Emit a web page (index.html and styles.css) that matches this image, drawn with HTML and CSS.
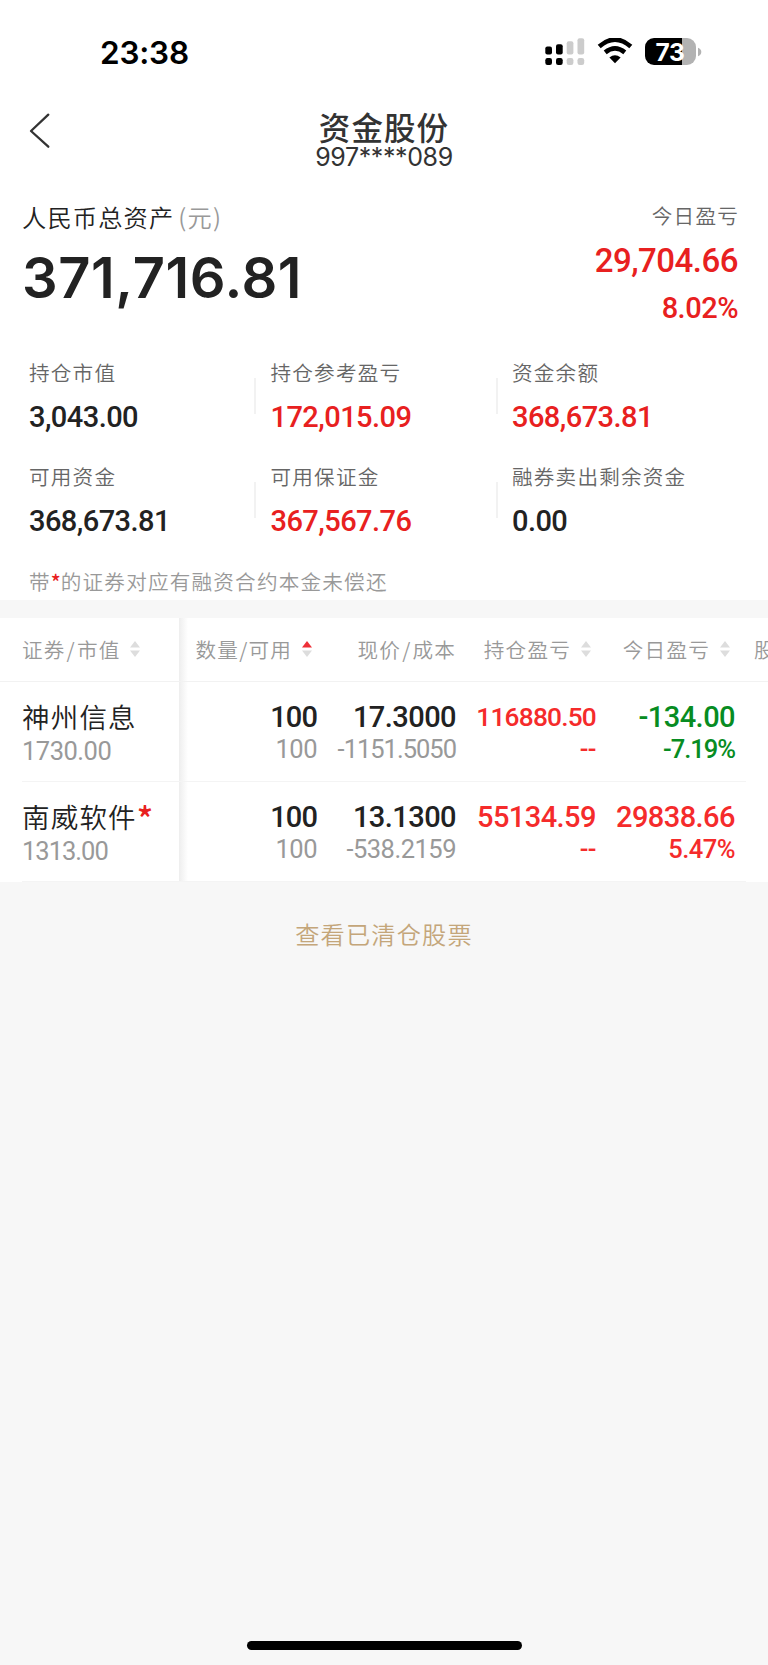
FILE: index.html
```html
<!DOCTYPE html>
<html lang="zh-CN">
<head>
<meta charset="utf-8">
<title>资金股份</title>
<link rel="stylesheet" href="styles.css">
</head>
<body>
<div class="screen">
  <header class="status">
    <span class="clock">23:38</span>
    <svg class="signal" width="40" height="28" viewBox="0 0 40 28">
      <g fill="#000"><rect x="0.3" y="8.5" width="6.7" height="8" rx="2"/><rect x="11" y="6.3" width="6.7" height="10.2" rx="2"/><rect x="0.3" y="20" width="6.7" height="7" rx="2.2"/><rect x="11" y="20" width="6.7" height="7" rx="2.2"/></g>
      <g fill="#ccc"><rect x="21.7" y="3.2" width="6.7" height="13.3" rx="2"/><rect x="32.5" y="0.2" width="6.7" height="16.3" rx="2"/><rect x="21.7" y="20" width="6.7" height="7" rx="2.2"/><rect x="32.5" y="20" width="6.7" height="7" rx="2.2"/></g>
    </svg>
    <svg class="wifi" width="36" height="27" viewBox="0 0 36 27">
      <path d="M2.2 8.4Q18 -5.2 33.8 8.4M8.2 14.4Q18 6.4 27.8 14.4" fill="none" stroke="#000" stroke-width="4.6"/>
      <path d="M12.4 19.6Q18 14.8 23.6 19.6L18 25.2Z"/>
    </svg>
    <div class="battery"><span class="battery-body">73</span><svg width="4" height="10" viewBox="0 0 4 10"><path d="M0 .8Q3.3 2 3.3 5T0 9.2Z" fill="#b2b2b2"/></svg></div>
  </header>

  <nav class="nav">
    <svg class="back" width="22" height="36" viewBox="0 0 22 36"><path d="M19.3 1.7L2 18 19.3 33.7" fill="none" stroke="#333" stroke-width="2.3" stroke-linecap="round" stroke-linejoin="round"/></svg>
    <div class="titles"><h1>资金股份</h1><span class="account">997****089</span></div>
  </nav>

  <section class="summary">
    <div class="total"><div class="total-label">人民币总资产<span class="unit">(元)</span></div><div class="total-value">371,716.81</div></div>
    <div class="today red"><span class="label">今日盈亏</span><span class="today-value">29,704.66</span><span class="today-pct">8.02%</span></div>
  </section>

  <section class="metrics">
    <div class="metric"><span class="label">持仓市值</span><span class="num">3,043.00</span></div>
    <div class="metric"><span class="label">持仓参考盈亏</span><span class="num red">172,015.09</span></div>
    <div class="metric"><span class="label">资金余额</span><span class="num red">368,673.81</span></div>
    <div class="metric"><span class="label">可用资金</span><span class="num">368,673.81</span></div>
    <div class="metric"><span class="label">可用保证金</span><span class="num red">367,567.76</span></div>
    <div class="metric"><span class="label">融券卖出剩余资金</span><span class="num">0.00</span></div>
  </section>
  <p class="note">带<b>*</b>的证券对应有融资合约本金未偿还</p>

  <section class="table">
    <div class="fixed">
      <div class="head">证券<i>/</i>市值<svg class="sort" width="10" height="16" viewBox="0 0 10 16"><path d="M0 6.5L5 0l5 6.5zM0 9.5h10L5 16z"/></svg></div>
      <div class="stock"><span class="name">神州信息</span><span class="sub">1730.00</span></div>
      <div class="stock"><span class="name">南威软件<b>*</b></span><span class="sub narrow">1313.00</span></div>
    </div>
    <div class="scroll">
      <div class="head cells">
        <span class="c1">数量/可用<svg class="sort" width="10" height="16" viewBox="0 0 10 16"><path class="on" d="M0 6.5L5 0l5 6.5z"/><path d="M0 9.5h10L5 16z"/></svg></span>
        <span class="c2">现价<i>/</i>成本</span>
        <span class="c3">持仓盈亏<svg class="sort" width="10" height="16" viewBox="0 0 10 16"><path d="M0 6.5L5 0l5 6.5zM0 9.5h10L5 16z"/></svg></span>
        <span class="c4">今日盈亏<svg class="sort" width="10" height="16" viewBox="0 0 10 16"><path d="M0 6.5L5 0l5 6.5zM0 9.5h10L5 16z"/></svg></span>
        <span class="c5">股份</span>
      </div>
      <div class="row cells">
        <div class="c1"><span class="num">100</span><span class="sub">100</span></div>
        <div class="c2"><span class="num">17.3000</span><span class="sub narrow">-1151.5050</span></div>
        <div class="c3 up"><span class="num small">116880.50</span><span class="sub">--</span></div>
        <div class="c4 down"><span class="num">-134.00</span><span class="sub narrow">-7.19%</span></div>
      </div>
      <div class="row cells">
        <div class="c1"><span class="num">100</span><span class="sub">100</span></div>
        <div class="c2"><span class="num">13.1300</span><span class="sub">-538.2159</span></div>
        <div class="c3 up"><span class="num">55134.59</span><span class="sub">--</span></div>
        <div class="c4 up"><span class="num">29838.66</span><span class="sub">5.47%</span></div>
      </div>
    </div>
  </section>

  <a class="closed">查看已清仓股票</a>
  <div class="home"></div>
</div>
</body>
</html>
```
FILE: styles.css
```css
* { box-sizing: border-box; }
body { margin: 0; background: #f7f7f7; color: #222; font-family: "Noto Sans CJK SC", sans-serif; font-weight: 350; }
.screen { width: 768px; height: 1665px; display: flex; flex-direction: column; overflow: hidden; }
svg { display: block; flex: none; }
i { font-style: normal; margin: 0 1px; }
.status { height: 90px; flex: none; background: #fff; display: flex; align-items: flex-start; padding: 38px 66px 0 100px; font-family: Inter, sans-serif; }
.clock { font-size: 31.5px; font-weight: 600; line-height: 30px; color: #000; letter-spacing: -.2px; }
.signal { margin-left: auto; }
.wifi { margin-left: 12px; }
.battery { display: flex; align-items: center; gap: 2px; margin-left: 12px; }
.battery-body { width: 51px; height: 27px; border-radius: 9px; background: linear-gradient(90deg, #000 37px, #b2b2b2 37px); color: #fff; font-size: 24.5px; font-weight: 700; line-height: 28px; text-align: center; padding-right: 1px; letter-spacing: -.3px; }
.nav { height: 94px; flex: none; background: #fff; position: relative; }
.back { position: absolute; left: 29px; top: 23px; }
.titles { display: flex; flex-direction: column; align-items: center; padding-top: 18px; color: #333; }
h1 { margin: 0; font-size: 31.5px; font-weight: 500; line-height: 37px; letter-spacing: 1.1px; }
.account { font: 400 25px/24px Inter, sans-serif; letter-spacing: -.4px; }
.summary { height: 166px; flex: none; background: #fff; display: flex; justify-content: space-between; padding: 14px 30px 0 22px; }
.total-label { font-size: 24.2px; line-height: 38px; letter-spacing: 1.2px; }
.unit { color: #999; margin-left: 4px; }
.total-value { font: 600 56px/84px Inter, sans-serif; letter-spacing: .6px; }
.today { display: flex; flex-direction: column; align-items: flex-end; font-family: Roboto, sans-serif; font-weight: 500; letter-spacing: -.5px; }
.today .label { line-height: 34px; margin-right: -1px; }
.today-value { font-size: 33px; line-height: 58px; }
.today-pct { font-size: 29px; line-height: 36px; }
.label { font-family: "Noto Sans CJK SC", sans-serif; font-weight: 350; font-size: 20.6px; letter-spacing: 1.2px; color: #666; line-height: 36px; }
.red { color: #e82020; }
.metrics { flex: none; height: 208px; background: #fff; display: grid; grid-template-columns: 241.5px 241.5px 1fr; grid-auto-rows: 103.5px; padding: 0 0 0 29px; }
.metric { display: flex; flex-direction: column; padding-top: 4px; background: linear-gradient(#f2f2f2, #f2f2f2) 225px 28px / 2px 36px no-repeat; }
.metric:nth-child(3n) { background: none; }
.num { font: 500 29px/54px Roboto, sans-serif; letter-spacing: -.55px; }
.note { margin: 0; height: 42px; flex: none; background: #fff; padding: 5px 0 0 29px; font-size: 20.6px; line-height: 36px; letter-spacing: 1.2px; color: #999; }
.note b, .name b { color: #e82020; font-weight: 500; }
.note b { letter-spacing: 0; }
.name b { font: 500 34px/20px "Noto Sans CJK SC", sans-serif; vertical-align: -4px; }
.table { flex: none; height: 264px; margin-top: 18px; background: #fff; display: flex; overflow: hidden; }
.fixed { width: 179px; flex: none; }
.scroll { width: 589px; flex: none; overflow: hidden; background: linear-gradient(90deg, #eee, #fff 9px); }
.head { height: 64px; border-bottom: 1px solid #f2f2f2; font-size: 20.6px; line-height: 60px; letter-spacing: 1.2px; color: #999; white-space: nowrap; padding-bottom: 1px; }
.fixed .head { display: flex; align-items: center; padding-left: 22px; }
.sort { fill: #ddd; margin-left: 10px; }
.sort .on { fill: #ee3038; }
.stock { height: 100px; margin-left: 22px; border-bottom: 1px solid #f4f4f4; display: flex; flex-direction: column; padding-top: 14px; }
.name { font-size: 27.5px; line-height: 40px; height: 40px; letter-spacing: 1.2px; }
.sub { font: 400 25.5px/30px Roboto, sans-serif; color: #999; letter-spacing: -.5px; }
.sub.narrow, .stock .narrow { letter-spacing: -1px; }
.cells { display: grid; grid-template-columns: 138px 139px 140px 139px 1fr; }
.cells > div { display: flex; flex-direction: column; align-items: flex-end; padding-top: 15px; }
.head.cells > span { display: flex; justify-content: flex-end; align-items: center; }
.head .c1 { padding-right: 5px; }
.head .c3, .head .c4 { padding-right: 5px; }
.head.cells > .c5 { justify-content: flex-start; padding-left: 19px; }
.row { height: 100px; border-bottom: 1px solid #f4f4f4; width: 567px; }
.row .num { line-height: 40px; }
.row .sub { line-height: 25px; }
.row .small { font-size: 26.3px; letter-spacing: -.8px; }
.row .c1 .num { letter-spacing: -.9px; }
.up, .up .sub { color: #f52b2b; }
.down, .down .sub { color: #078c22; }
.c3 .sub, .c4 .sub { font-weight: 500; }
.closed { flex: none; align-self: center; margin-top: 32px; font-size: 24.2px; line-height: 40px; letter-spacing: 1.2px; color: #c4a67a; }
.home { width: 275px; height: 9px; border-radius: 5px; background: #000; margin: auto auto 15px; flex: none; }
```
